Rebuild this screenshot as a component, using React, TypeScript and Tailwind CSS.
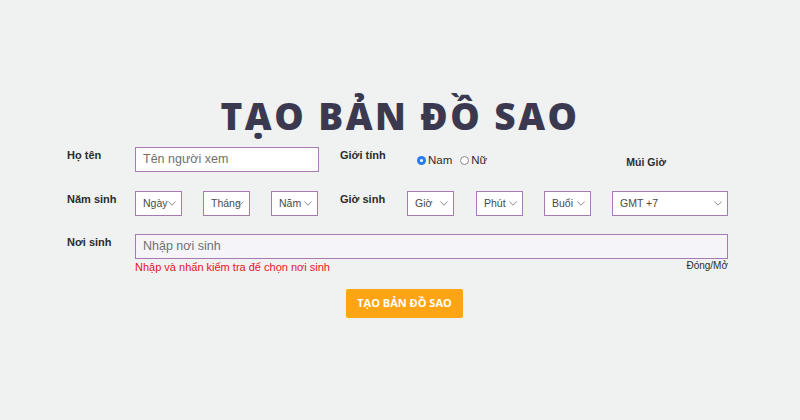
import React from 'react';

// Small chevron like the native select arrow
function Chevron() {
  return (
    <svg className="shrink-0 w-[8px] h-[5px]" viewBox="0 0 8 5" fill="none">
      <path d="M0.6 0.8 L4 4.2 L7.4 0.8" stroke="#8a8a8a" strokeWidth="1" strokeLinecap="round" strokeLinejoin="round" />
    </svg>
  );
}

// Fake select box: label text plus a small chevron, framed in purple
function SelectBox({ label, width }: { label: string; width: string }) {
  return (
    <div
      className={`${width} h-[25px] flex items-center justify-between pl-[7px] pr-[5px] border border-[#a77ab3] bg-white text-[10.5px] text-[#4a4a4a] overflow-hidden`}
    >
      <span className="min-w-0 whitespace-nowrap">{label}</span>
      <Chevron />
    </div>
  );
}

function Label({ text, width }: { text: string; width: string }) {
  return <div className={`${width} text-[11px] leading-[16px] font-bold text-[#2d2d2d]`}>{text}</div>;
}

export default function App() {
  return (
    <div
      className="w-[800px] h-[420px] bg-[#f0f1f1] flex flex-col"
      style={{ fontFamily: '"Liberation Sans", Arial, sans-serif' }}
    >
      <h1
        className="mt-[94px] text-center text-[37px] leading-[44px] font-extrabold tracking-[2.5px] text-[#3b3950]"
        style={{ fontFamily: '"Open Sans", "Noto Sans", sans-serif' }}
      >
        TẠO BẢN ĐỒ SAO
      </h1>

      <div className="mt-[9px] pl-[67px] flex flex-col">
        {/* Row 1 */}
        <div className="flex items-start h-[25px]">
          <Label text="Họ tên" width="w-[68px]" />
          <div className="w-[184px] h-[25px] flex items-center px-[7px] border border-[#a77ab3] bg-white text-[12.5px] text-[#6f6f6f]">
            Tên người xem
          </div>
          <div className="w-[21px]" />
          <Label text="Giới tính" width="w-[77px]" />
          <div className="flex items-center pt-[5px] text-[11.5px] text-[#2d2d2d]">
            <span className="w-[9px] h-[9px] rounded-full bg-[#2a7bf0] flex items-center justify-center">
              <span className="w-[3px] h-[3px] rounded-full bg-white" />
            </span>
            <span className="ml-[2px]">Nam</span>
            <span className="ml-[8px] w-[9px] h-[9px] rounded-full border border-[#8a8a8a] bg-white" />
            <span className="ml-[2px]">Nữ</span>
          </div>
          <div className="ml-[139px] pt-[8px] text-[10.5px] font-bold text-[#2d2d2d]">Múi Giờ</div>
        </div>

        {/* Row 2 */}
        <div className="mt-[19px] flex items-start h-[25px]">
          <Label text="Năm sinh" width="w-[68px]" />
          <SelectBox label="Ngày" width="w-[47px]" />
          <div className="w-[21px]" />
          <SelectBox label="Tháng" width="w-[47px]" />
          <div className="w-[21px]" />
          <SelectBox label="Năm" width="w-[47px]" />
          <div className="w-[22px]" />
          <Label text="Giờ sinh" width="w-[67px]" />
          <SelectBox label="Giờ" width="w-[47px]" />
          <div className="w-[22px]" />
          <SelectBox label="Phút" width="w-[47px]" />
          <div className="w-[21px]" />
          <SelectBox label="Buổi" width="w-[47px]" />
          <div className="w-[21px]" />
          <SelectBox label="GMT +7" width="w-[116px]" />
        </div>

        {/* Row 3 */}
        <div className="mt-[18px] flex items-start">
          <Label text="Nơi sinh" width="w-[68px]" />
          <div className="flex flex-col w-[593px]">
            <div className="h-[25px] flex items-center px-[7px] border border-[#a77ab3] bg-[#f5f5f9] text-[12.5px] text-[#6f6f6f]">
              Nhập nơi sinh
            </div>
            <div className="flex items-start justify-between">
              <span className="text-[11px] leading-[16px] text-[#e8141c]">Nhập và nhấn kiểm tra để chọn nơi sinh</span>
              <span className="text-[10px] leading-[14px] text-[#2d2d2d]">Đóng/Mở</span>
            </div>
          </div>
        </div>
      </div>

      <div className="mt-[14px] flex justify-center">
        <button
          type="button"
          className="ml-[9px] w-[117px] h-[29px] rounded-[2px] bg-[#ffa412] text-white text-[11px] font-bold"
          style={{ fontFamily: '"Open Sans", "Noto Sans", sans-serif' }}
        >
          TẠO BẢN ĐỒ SAO
        </button>
      </div>
    </div>
  );
}
